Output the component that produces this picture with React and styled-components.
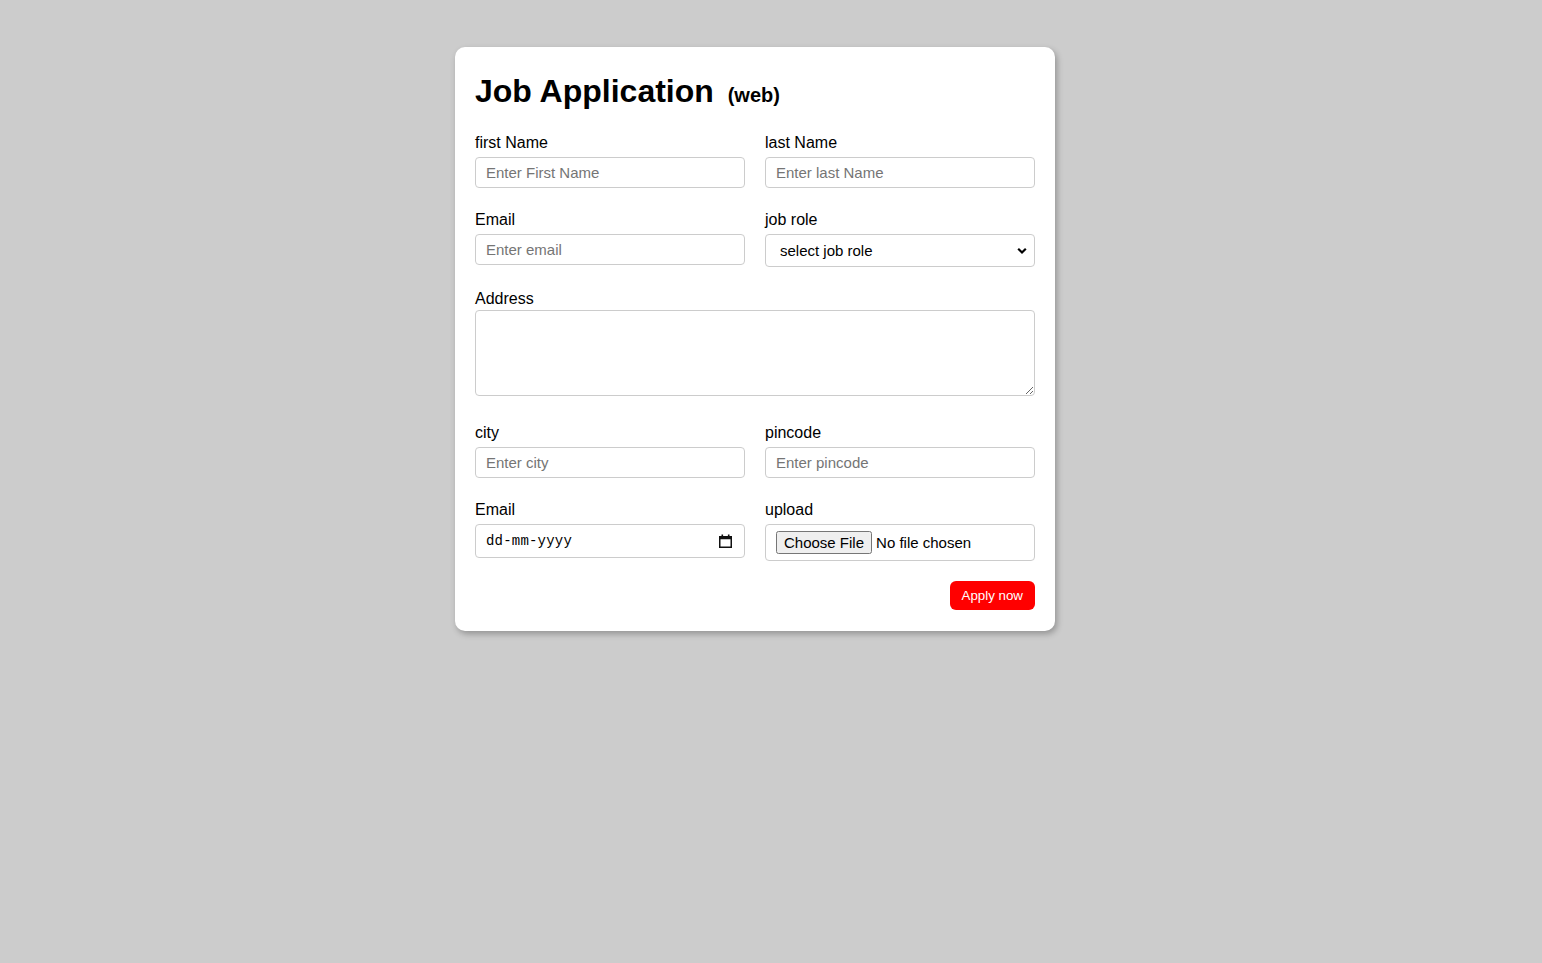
import React from "react";
import styled, { createGlobalStyle } from "styled-components";

const GlobalStyle = createGlobalStyle`
  body {
    margin: 0;
    background: #cccccc;
    font-family: "Comic Sans MS", "Liberation Sans", Arial, sans-serif;
  }
`;

const Page = styled.div`
  padding: 47px 0 40px 455px;
`;

const Card = styled.form`
  width: 600px;
  box-sizing: border-box;
  background: #fff;
  border-radius: 10px;
  padding: 20px 20px 21px;
  box-shadow: 2px 3px 6px rgba(0, 0, 0, 0.28);
`;

const Title = styled.h1`
  margin: 5px 0 19px;
  font-size: 32px;
  line-height: 38px;
  font-weight: bold;
  color: #000;
  font-family: "Comic Sans MS", "Liberation Sans", Arial, sans-serif;
`;

const Sub = styled.span`
  font-size: 20px;
  margin-left: 5px;
`;

const Grid = styled.div`
  display: grid;
  grid-template-columns: 1fr 1fr;
  column-gap: 20px;
`;

const Field = styled.div`
  grid-column: ${(p) => (p.wide ? "1 / 3" : "auto")};
  margin-bottom: ${(p) => (p.last ? "20px" : "22px")};
`;

const Label = styled.label`
  display: block;
  font-size: 16px;
  line-height: 20px;
  color: #000;
  margin-bottom: ${(p) => (p.tight ? "1px" : "4px")};
`;

const Input = styled.input`
  display: block;
  width: 100%;
  box-sizing: border-box;
  height: 31px;
  padding: 0 10px;
  border: 1px solid #ccc;
  border-radius: 4px;
  font-family: "Liberation Sans", Arial, sans-serif;
  font-size: 15px;
  color: #000;
  background: #fff;
  outline: none;
  &::placeholder {
    color: #757575;
  }
`;

const Control = styled.div`
  position: relative;
`;

const DateInput = styled(Input)`
  height: 34px;
  padding-right: 36px;
  font-family: "Liberation Mono", monospace;
  font-size: 14px;
  letter-spacing: 0.2px;
  &::placeholder {
    color: #000;
  }
`;

const FileInput = styled(Input)`
  height: 37px;
  padding: 6px 10px;
  &::file-selector-button {
    font-family: "Liberation Sans", Arial, sans-serif;
    font-size: 15px;
  }
`;

const Select = styled.select`
  display: block;
  width: 100%;
  box-sizing: border-box;
  height: 33px;
  padding: 0 30px 0 14px;
  border: 1px solid #ccc;
  border-radius: 4px;
  font-family: "Liberation Sans", Arial, sans-serif;
  font-size: 15px;
  color: #000;
  background: #fff;
  outline: none;
  appearance: none;
`;

const Overlay = styled.svg`
  position: absolute;
  top: 50%;
  right: ${(p) => p.right};
  transform: translateY(-50%);
  pointer-events: none;
`;

const TextArea = styled.textarea`
  display: block;
  width: 100%;
  box-sizing: border-box;
  height: 86px;
  margin-bottom: 5px;
  border: 1px solid #ccc;
  border-radius: 4px;
  padding: 8px 10px;
  font-family: "Liberation Sans", Arial, sans-serif;
  font-size: 15px;
  outline: none;
`;

const Actions = styled.div`
  display: flex;
  justify-content: flex-end;
`;

const Button = styled.button`
  height: 29px;
  padding: 0 12px;
  border: none;
  border-radius: 6px;
  background: #ff0000;
  color: #fff;
  font-family: "Liberation Sans", Arial, sans-serif;
  font-size: 13.33px;
  cursor: pointer;
`;

const Chevron = () => (
  <Overlay right="8px" width="10" height="7" viewBox="0 0 10 7">
    <path d="M1.2 1.2 L5 5 L8.8 1.2" fill="none" stroke="#000" strokeWidth="2.2" />
  </Overlay>
);

const Calendar = () => (
  <Overlay right="13px" width="13" height="14" viewBox="0 0 13 14">
    <rect x="0.75" y="2.75" width="11.5" height="10.5" fill="none" stroke="#111" strokeWidth="1.5" />
    <rect x="0.75" y="2.75" width="11.5" height="2.5" fill="#111" />
    <rect x="2.5" y="0.5" width="1.6" height="2.5" fill="#111" />
    <rect x="8.9" y="0.5" width="1.6" height="2.5" fill="#111" />
  </Overlay>
);

export default function App() {
  return (
    <>
      <GlobalStyle />
      <Page>
        <Card onSubmit={(e) => e.preventDefault()}>
          <Title>
            Job Application <Sub>(web)</Sub>
          </Title>
          <Grid>
            <Field>
              <Label>first Name</Label>
              <Input type="text" placeholder="Enter First Name" />
            </Field>
            <Field>
              <Label>last Name</Label>
              <Input type="text" placeholder="Enter last Name" />
            </Field>
            <Field>
              <Label>Email</Label>
              <Input type="email" placeholder="Enter email" />
            </Field>
            <Field>
              <Label>job role</Label>
              <Control>
                <Select defaultValue="">
                  <option value="">select job role</option>
                  <option value="frontend">Frontend Developer</option>
                  <option value="backend">Backend Developer</option>
                  <option value="fullstack">Full Stack Developer</option>
                </Select>
                <Chevron />
              </Control>
            </Field>
            <Field wide>
              <Label tight>Address</Label>
              <TextArea />
            </Field>
            <Field>
              <Label>city</Label>
              <Input type="text" placeholder="Enter city" />
            </Field>
            <Field>
              <Label>pincode</Label>
              <Input type="text" placeholder="Enter pincode" />
            </Field>
            <Field last>
              <Label>Email</Label>
              <Control>
                <DateInput type="text" placeholder="dd-mm-yyyy" />
                <Calendar />
              </Control>
            </Field>
            <Field last>
              <Label>upload</Label>
              <FileInput type="file" />
            </Field>
          </Grid>
          <Actions>
            <Button type="submit">Apply now</Button>
          </Actions>
        </Card>
      </Page>
    </>
  );
}
